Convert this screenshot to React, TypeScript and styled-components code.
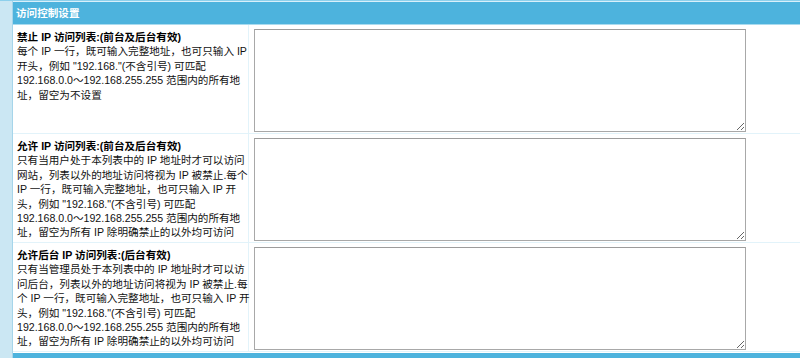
import React from 'react';
import styled, { createGlobalStyle } from 'styled-components';

const GlobalStyle = createGlobalStyle`
    html, body {
        margin: 0;
        padding: 0;
        background: #fff;
    }
    body {
        font-family: "Liberation Sans", "Noto Sans CJK SC", sans-serif;
        font-size: 10.6px;
        color: #111;
    }
`;

const Frame = styled.div`
    background: #cbe7f3;
    padding-left: 12px;
    border-top: 1px solid #8dd0ec;
    height: 357px;
`;

const Panel = styled.div`
    display: flex;
    flex-direction: column;
    background: #fff;
    border-left: 1px solid #a6d5ea;
    height: 100%;
`;

const Header = styled.div`
    height: 22px;
    line-height: 22px;
    padding-left: 3px;
    background: #4db3dd;
    border-top: 1px solid #d9f0fa;
    border-bottom: 1px solid #a9dbef;
    color: #fff;
    font-weight: bold;
    font-size: 10.6px;
`;

const Row = styled.div<{ $height: number }>`
    display: grid;
    grid-template-columns: 236px 1fr;
    height: ${p => p.$height}px;
    border-bottom: 1px solid #e2f3fa;
`;

const Label = styled.div`
    padding: 5px 4px 0 4px;
    border-right: 1px solid #e2f3fa;
    line-height: 14.4px;
    white-space: nowrap;
`;

const Title = styled.div`
    font-weight: bold;
    color: #000;
`;

const Field = styled.div`
    padding: 4px 0 0 5px;
`;

const Area = styled.textarea`
    box-sizing: border-box;
    display: block;
    width: 492px;
    height: 103px;
    margin: 0;
    border: 1px solid #a8a8a8;
    border-top-color: #9c9c9c;
    background: #fff;
    font-family: inherit;
    font-size: 12px;
    resize: both;
    outline: none;
`;

const Footer = styled.div`
    height: 5px;
    margin-top: auto;
    background: #4db3dd;
`;

const rows = [
    {
        title: '禁止 IP 访问列表:(前台及后台有效)',
        height: 108,
        lines: [
            '每个 IP 一行，既可输入完整地址，也可只输入 IP',
            '开头，例如 "192.168."(不含引号) 可匹配',
            '192.168.0.0～192.168.255.255 范围内的所有地',
            '址，留空为不设置',
        ],
    },
    {
        title: '允许 IP 访问列表:(前台及后台有效)',
        height: 108,
        lines: [
            '只有当用户处于本列表中的 IP 地址时才可以访问',
            '网站，列表以外的地址访问将视为 IP 被禁止.每个',
            'IP 一行，既可输入完整地址，也可只输入 IP 开',
            '头，例如 "192.168."(不含引号) 可匹配',
            '192.168.0.0～192.168.255.255 范围内的所有地',
            '址，留空为所有 IP 除明确禁止的以外均可访问',
        ],
    },
    {
        title: '允许后台 IP 访问列表:(后台有效)',
        height: 108,
        lines: [
            '只有当管理员处于本列表中的 IP 地址时才可以访',
            '问后台，列表以外的地址访问将视为 IP 被禁止.每',
            '个 IP 一行，既可输入完整地址，也可只输入 IP 开',
            '头，例如 "192.168."(不含引号) 可匹配',
            '192.168.0.0～192.168.255.255 范围内的所有地',
            '址，留空为所有 IP 除明确禁止的以外均可访问',
        ],
    },
];

export default function App() {
    return (
        <>
            <GlobalStyle />
            <Frame>
                <Panel>
                    <Header>访问控制设置</Header>
                    {rows.map(row => (
                        <Row key={row.title} $height={row.height}>
                            <Label>
                                <Title>{row.title}</Title>
                                {row.lines.map(line => <div key={line}>{line}</div>)}
                            </Label>
                            <Field>
                                <Area />
                            </Field>
                        </Row>
                    ))}
                    <Footer />
                </Panel>
            </Frame>
        </>
    );
}
